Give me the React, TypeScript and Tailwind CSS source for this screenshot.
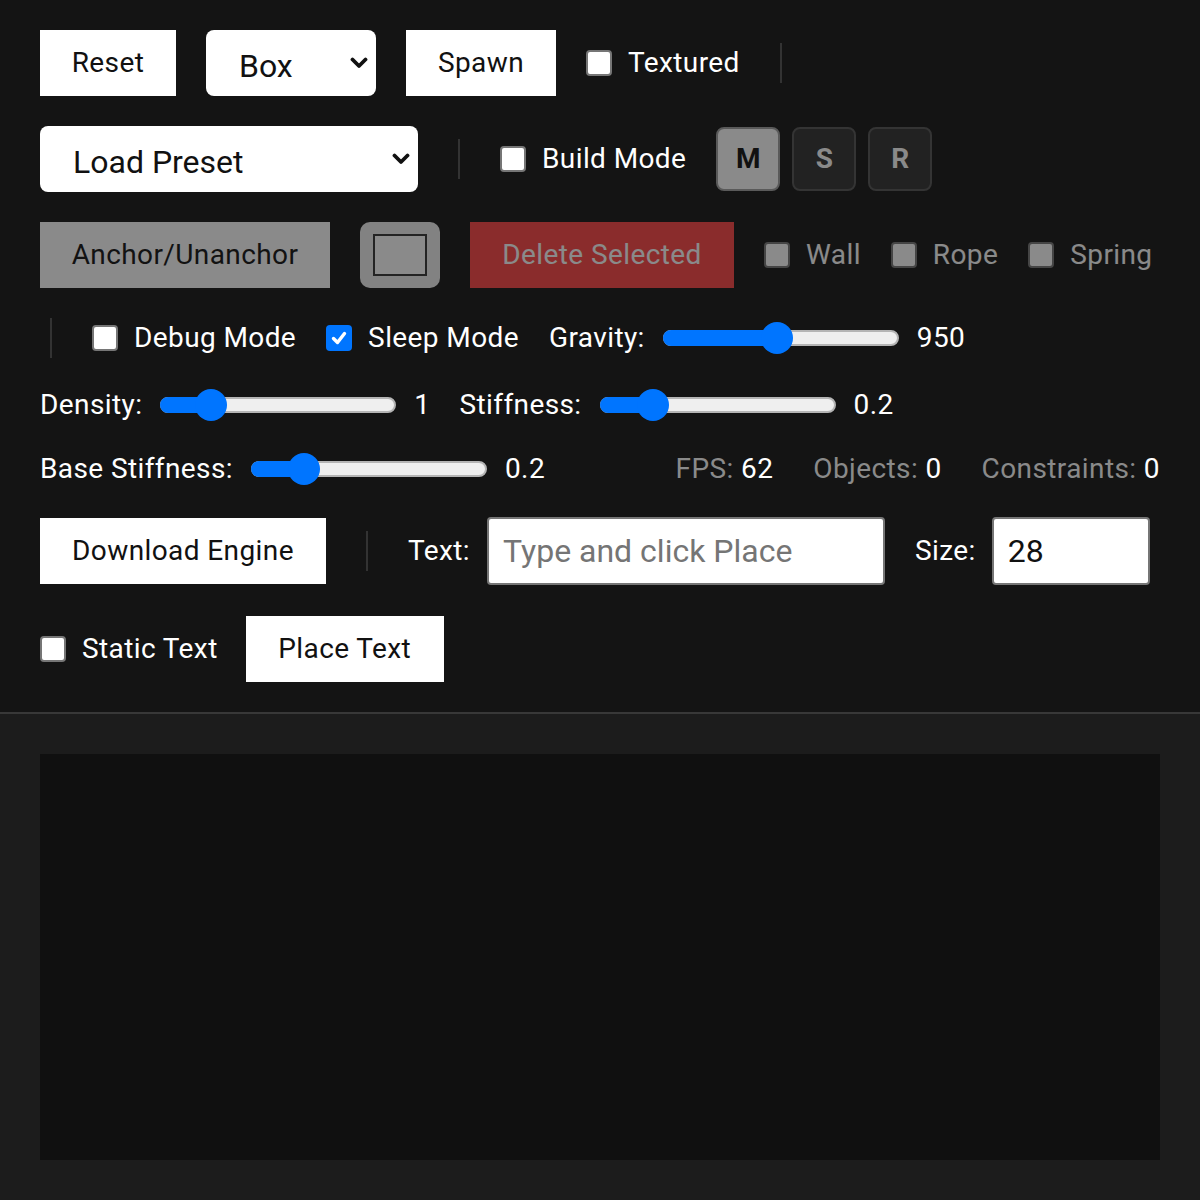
import React from "react";

function Btn({ w, children, className = "" }: { w: number; children: React.ReactNode; className?: string }) {
  return (
    <div
      className={`h-[66px] flex items-center justify-center text-[28px] tracking-[0.4px] leading-none shrink-0 ${className}`}
      style={{ width: w }}
    >
      {children}
    </div>
  );
}

function Chevron() {
  return (
    <svg width="18" height="12" viewBox="0 0 18 12" className="shrink-0">
      <polyline points="2.5,2.5 9,9 15.5,2.5" fill="none" stroke="#111" strokeWidth="3.8" strokeLinecap="round" strokeLinejoin="round" />
    </svg>
  );
}

function Select({ w, label }: { w: number; label: string }) {
  return (
    <div
      className="h-[66px] bg-white rounded-[8px] flex items-center justify-between pl-[33px] pr-[8px] text-[32px] leading-none text-[#111] shrink-0"
      style={{ width: w }}
    >
      <span className="pt-[6px]">{label}</span>
      <Chevron />
    </div>
  );
}

function Check({ label, checked = false, className = "" }: { label: string; checked?: boolean; className?: string }) {
  return (
    <div className={`flex items-center gap-[16px] shrink-0 ${className}`}>
      {checked ? (
        <div className="w-[26px] h-[26px] rounded-[4px] bg-[#0075ff] flex items-center justify-center">
          <svg width="18" height="18" viewBox="0 0 18 18">
            <polyline points="3.5,9.5 7.5,13.5 14.5,4.5" fill="none" stroke="#fff" strokeWidth="3.4" strokeLinecap="round" strokeLinejoin="round" />
          </svg>
        </div>
      ) : (
        <div className="w-[26px] h-[26px] rounded-[4px] bg-white border-2 border-[#767676]" />
      )}
      <span className="text-[28px] tracking-[0.4px] leading-none text-white">{label}</span>
    </div>
  );
}

function Sep() {
  return <div className="w-[2px] h-[40px] bg-[#333] mx-[10px] shrink-0" />;
}

function Slider({ thumb }: { thumb: number }) {
  return (
    <div className="relative w-[236px] h-[34px] shrink-0">
      <div className="absolute left-0 right-0 top-[9px] h-[16px] rounded-full bg-[#efefef] border-2 border-[#b5b5b5]" />
      <div className="absolute left-0 top-[9px] h-[16px] rounded-l-full bg-[#0075ff]" style={{ width: thumb }} />
      <div
        className="absolute top-[1px] w-[32px] h-[32px] rounded-full bg-[#0075ff]"
        style={{ left: thumb - 16 }}
      />
    </div>
  );
}

function SliderGroup({ label, thumb, value }: { label: string; thumb: number; value: string }) {
  return (
    <div className="flex items-center gap-[18px] shrink-0">
      <span className="text-[28px] tracking-[0.4px] leading-none text-white">{label}</span>
      <Slider thumb={thumb} />
      <span className="text-[28px] tracking-[0.4px] leading-none text-white">{value}</span>
    </div>
  );
}

function Stat({ label, value }: { label: string; value: string }) {
  return (
    <span className="text-[28px] tracking-[0.4px] leading-none text-[#8a8a8a]">
      {label} <span className="text-white">{value}</span>
    </span>
  );
}

function ModeBtn({ letter, active = false }: { letter: string; active?: boolean }) {
  return (
    <div
      className={`w-[64px] h-[64px] rounded-[8px] border-2 flex items-center justify-center text-[28px] font-bold leading-none ${
        active ? "bg-[#8a8a8a] border-[#5a5a5a] text-[#111]" : "bg-[#222] border-[#343434] text-[#8a8a8a]"
      }`}
    >
      {letter}
    </div>
  );
}

export default function App() {
  return (
    <div className="w-[1200px] h-[1200px] bg-[#141414] font-['Roboto',sans-serif] flex flex-col overflow-hidden">
      <div className="px-[40px] pt-[30px] pb-[30px] flex flex-col gap-[30px]">
        {/* Row 1 */}
        <div className="flex items-center gap-[30px] h-[66px]">
          <Btn w={136} className="bg-white text-[#111]">Reset</Btn>
          <Select w={170} label="Box" />
          <Btn w={150} className="bg-white text-[#111]">Spawn</Btn>
          <Check label="Textured" />
          <Sep />
        </div>
        {/* Row 2 */}
        <div className="flex items-center gap-[30px] h-[66px]">
          <Select w={378} label="Load Preset" />
          <Sep />
          <Check label="Build Mode" />
          <div className="flex items-center gap-[12px]">
            <ModeBtn letter="M" active />
            <ModeBtn letter="S" />
            <ModeBtn letter="R" />
          </div>
        </div>
        {/* Row 3 */}
        <div className="flex items-center gap-[30px] h-[66px]">
          <Btn w={290} className="bg-white text-[#111] opacity-50">Anchor/Unanchor</Btn>
          <div className="w-[80px] h-[66px] rounded-[10px] bg-[#efefef] opacity-50 flex items-center justify-center shrink-0">
            <div className="w-[54px] h-[42px] border-2 border-[#333] bg-white" />
          </div>
          <Btn w={264} className="bg-[#ff4444] text-white opacity-50">Delete Selected</Btn>
          <Check label="Wall" className="opacity-50" />
          <Check label="Rope" className="opacity-50" />
          <Check label="Spring" className="opacity-50" />
        </div>
        {/* Row 4 */}
        <div className="flex items-center gap-[30px] h-[40px]">
          <Sep />
          <Check label="Debug Mode" />
          <Check label="Sleep Mode" checked />
          <SliderGroup label="Gravity:" thumb={114} value="950" />
        </div>
        {/* Row 5 */}
        <div className="flex items-center gap-[29px] h-[34px]">
          <SliderGroup label="Density:" thumb={51} value="1" />
          <SliderGroup label="Stiffness:" thumb={53} value="0.2" />
        </div>
        {/* Row 6 */}
        <div className="flex items-center h-[34px]">
          <SliderGroup label="Base Stiffness:" thumb={53} value="0.2" />
          <div className="ml-auto flex items-center gap-[40px]">
            <Stat label="FPS:" value="62" />
            <Stat label="Objects:" value="0" />
            <Stat label="Constraints:" value="0" />
          </div>
        </div>
        {/* Row 7 */}
        <div className="flex items-center gap-[30px] h-[70px]">
          <Btn w={286} className="bg-white text-[#111]">Download Engine</Btn>
          <Sep />
          <div className="flex items-center gap-[17px]">
            <span className="text-[28px] tracking-[0.4px] leading-none text-white">Text:</span>
            <div className="w-[398px] h-[68px] bg-white border-2 border-[#767676] rounded-[4px] flex items-center px-[14px] text-[32px] leading-none text-[#757575]">
              Type and click Place
            </div>
          </div>
          <div className="flex items-center gap-[16px]">
            <span className="text-[28px] tracking-[0.4px] leading-none text-white">Size:</span>
            <div className="w-[158px] h-[68px] bg-white border-2 border-[#767676] rounded-[4px] flex items-center px-[14px] text-[32px] leading-none text-[#111]">
              28
            </div>
          </div>
        </div>
        {/* Row 8 */}
        <div className="flex items-center gap-[28px] h-[66px]">
          <Check label="Static Text" />
          <Btn w={198} className="bg-white text-[#111]">Place Text</Btn>
        </div>
      </div>
      <div className="flex-1 border-t-2 border-[#383838] bg-[#1c1c1c] p-[40px] flex">
        <div className="flex-1 bg-[#101010]" />
      </div>
    </div>
  );
}
